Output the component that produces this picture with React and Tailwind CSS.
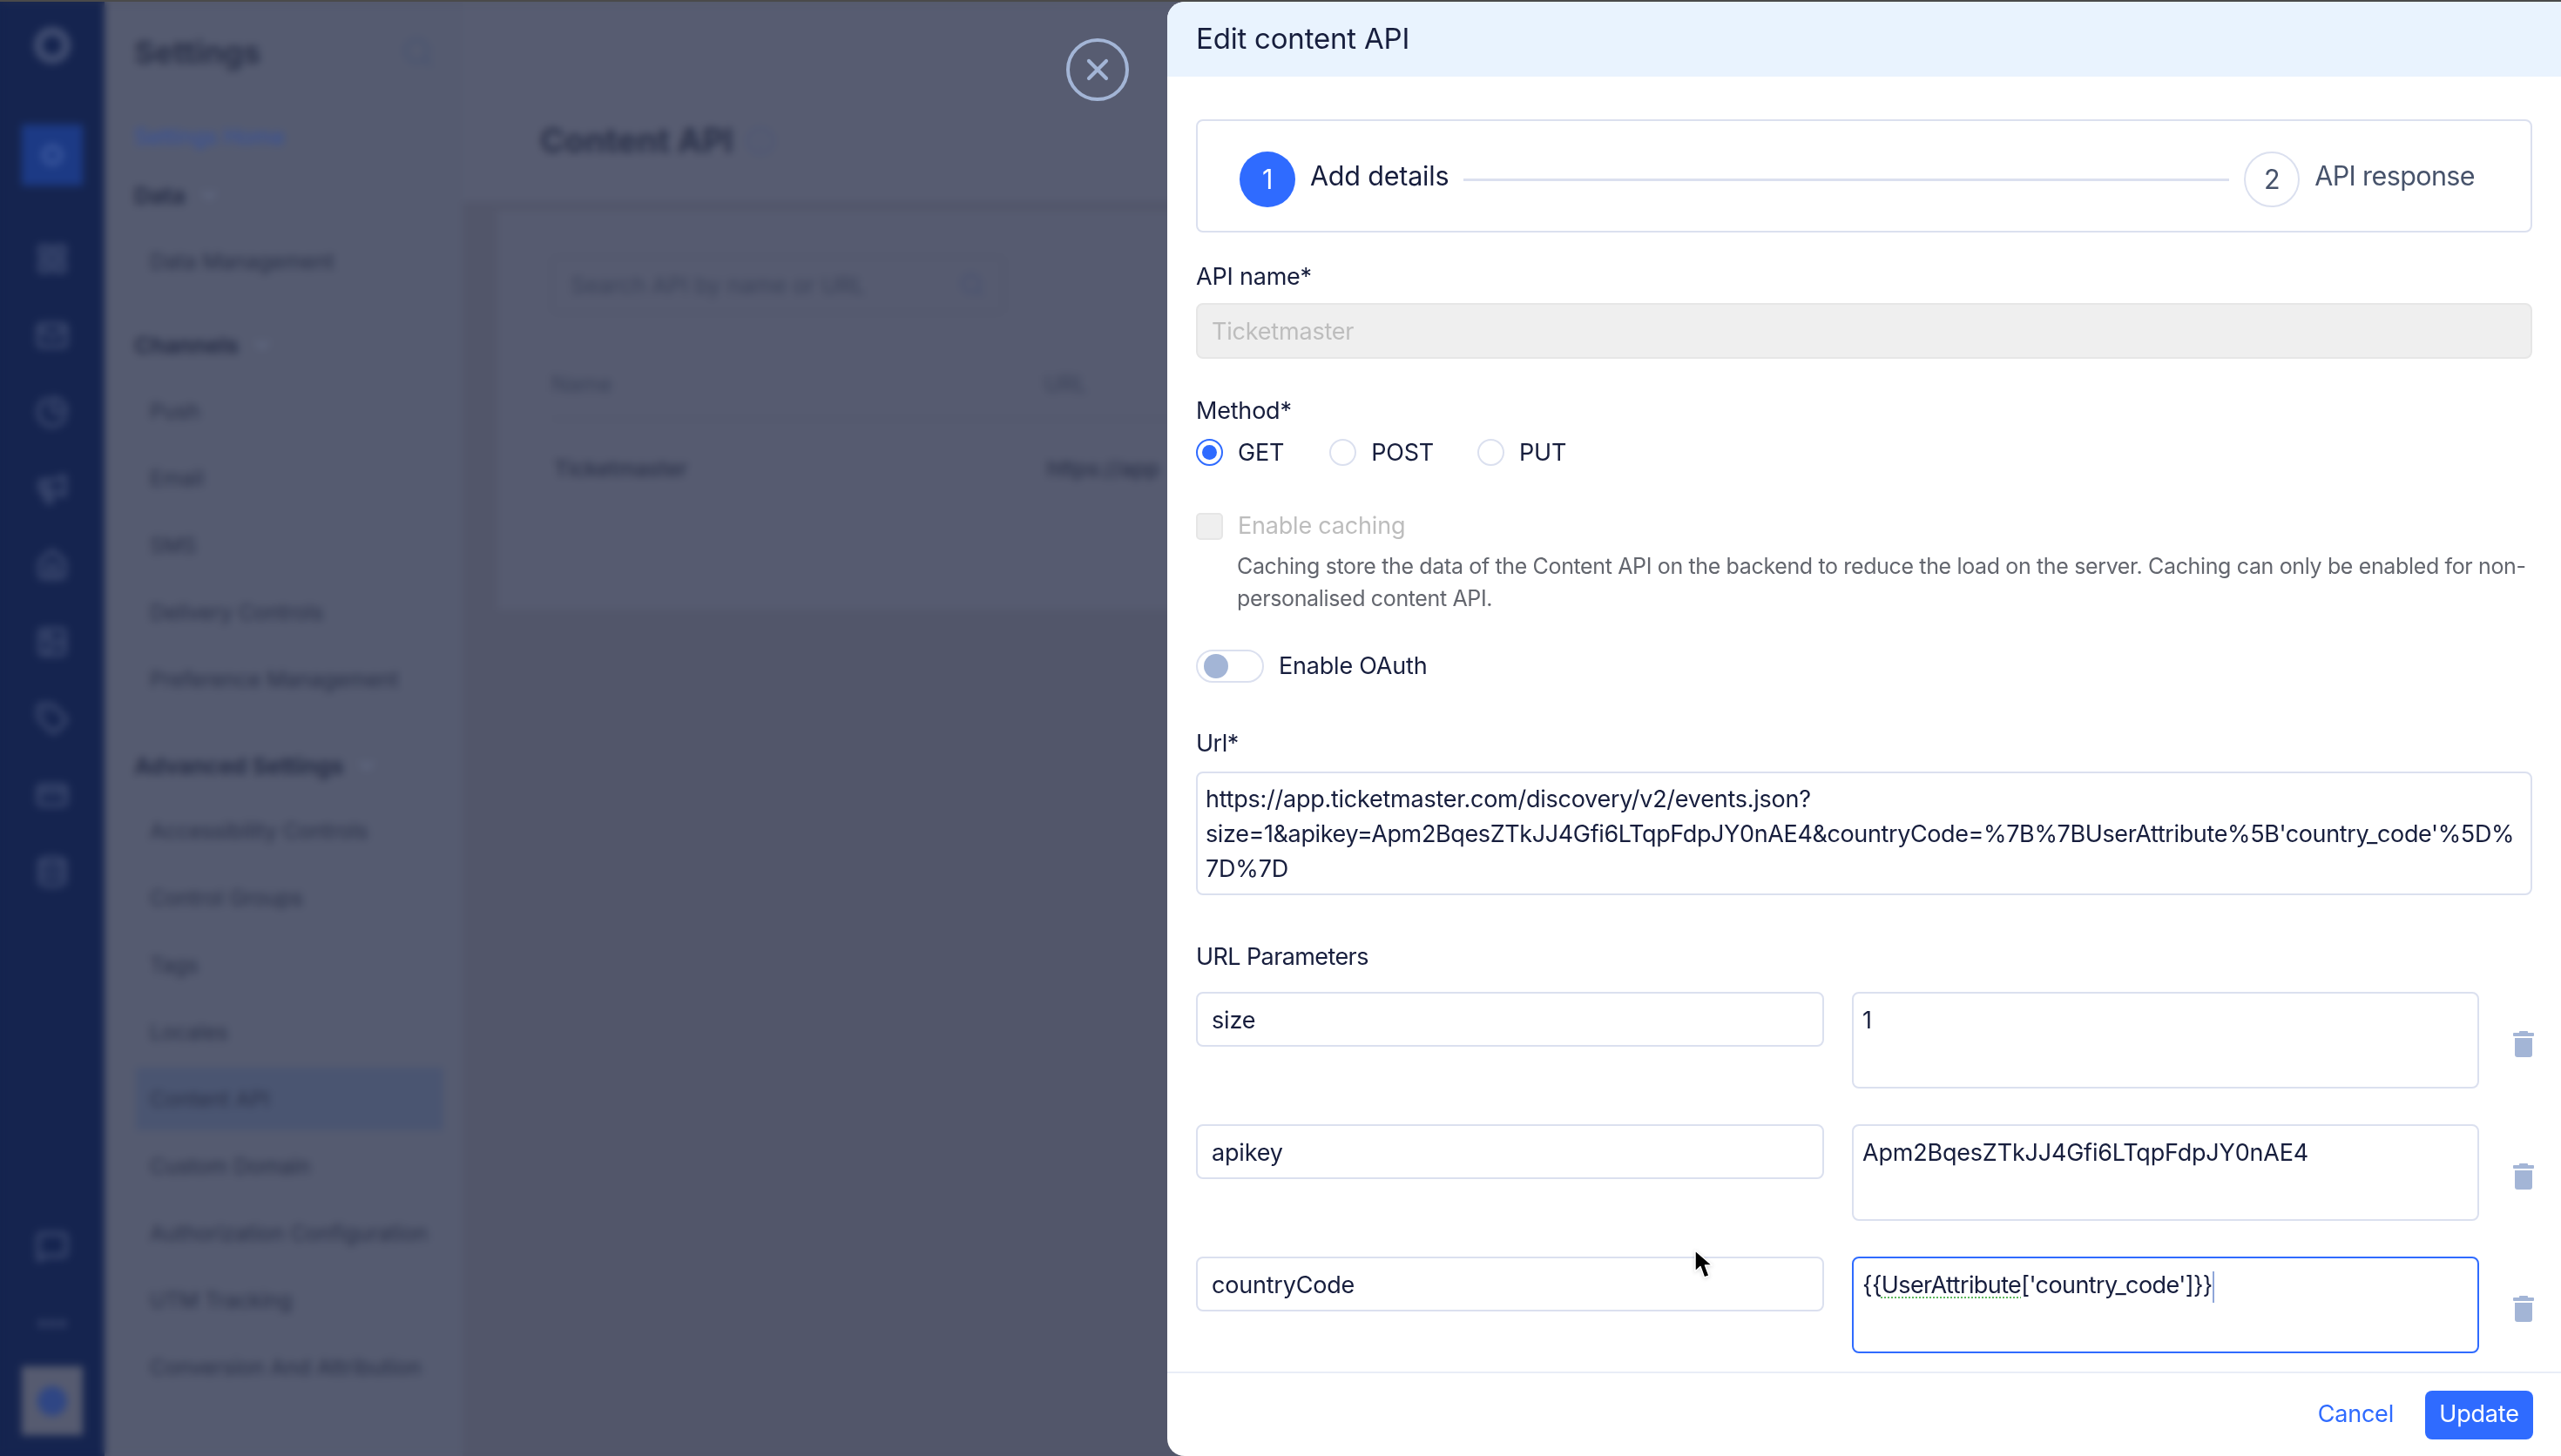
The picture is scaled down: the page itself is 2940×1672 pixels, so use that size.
import {
  LayoutGrid,
  Mail,
  PieChart,
  Megaphone,
  House,
  Image,
  Tag,
  CreditCard,
  Database,
  MessageSquare,
  MoreHorizontal,
  Search,
  ChevronDown,
  Info,
  X,
} from "lucide-react";

const railIcons = [LayoutGrid, Mail, PieChart, Megaphone, House, Image, Tag, CreditCard, Database];

const channelLinks = ["Push", "Email", "SMS", "Delivery Controls", "Preference Management"];
const advancedLinks = [
  "Accessibility Controls",
  "Control Groups",
  "Tags",
  "Locales",
  "Content API",
  "Custom Domain",
  "Authorization Configuration",
  "UTM Tracking",
  "Conversion And Attribution",
];

const params = [
  { key: "size", value: "1" },
  { key: "apikey", value: "Apm2BqesZTkJJ4Gfi6LTqpFdpJY0nAE4" },
  { key: "countryCode", focused: true },
];

const SideItem = ({ label, active }) => (
  <div
    className={`w-[353px] h-[72px] px-[16px] flex items-center text-[24.5px] whitespace-nowrap text-[#2a3149] ${
      active ? "bg-[#4a5571]" : ""
    }`}
  >
    {label}
  </div>
);

const SideHeading = ({ label, className }) => (
  <div className={`h-[52px] flex items-center gap-[14px] text-[26px] font-bold text-[#272e47] ${className}`}>
    {label}
    <ChevronDown size={26} className="text-[#6a7490]" />
  </div>
);

const Radio = ({ label, checked, className }) => (
  <div className={`flex items-center gap-[17px] ${className}`}>
    <div
      className={`w-[31px] h-[31px] rounded-full border-2 flex items-center justify-center ${
        checked ? "border-[#2f6bff]" : "border-[#dbe0ef]"
      }`}
    >
      {checked && <div className="w-[17px] h-[17px] rounded-full bg-[#2f6bff]" />}
    </div>
    <span className="pt-[2px]">{label}</span>
  </div>
);

const TrashIcon = () => (
  <svg width="24" height="30" viewBox="0 0 24 30" className="shrink-0 fill-[#a3b5d6]">
    <path d="M8 0h8a1 1 0 0 1 1 1v1h6a1 1 0 0 1 1 1v2a1 1 0 0 1-1 1H1a1 1 0 0 1-1-1V3a1 1 0 0 1 1-1h6V1a1 1 0 0 1 1-1z" />
    <path d="M2 8h20v19a3 3 0 0 1-3 3H5a3 3 0 0 1-3-3z" />
  </svg>
);

const Background = () => (
  <div className="h-full flex bg-[#52566a]">
    <div className="w-[120px] shrink-0 bg-[#15244f] flex flex-col items-center text-[#3d4a70]">
      <div className="h-[100px] flex items-center justify-center">
        <div className="w-[42px] h-[42px] rounded-full border-[10px] border-[#434f72]" />
      </div>
      <div className="w-[70px] h-[70px] mt-[41px] bg-[#1c3a85] flex items-center justify-center">
        <div className="w-[24px] h-[24px] rounded-full border-[5px] border-[#3f5ba0]" />
      </div>
      <div className="flex flex-col gap-[50px] mt-[65px]">
        {railIcons.map((Icon, i) => (
          <Icon key={i} size={38} strokeWidth={3} />
        ))}
      </div>
      <div className="mt-auto flex flex-col items-center">
        <MessageSquare size={38} strokeWidth={3} />
        <MoreHorizontal size={40} strokeWidth={3} className="mt-[50px]" />
        <div className="w-[70px] h-[79px] mt-[29px] mb-[24px] bg-[#565b70] flex items-center justify-center">
          <div className="w-[34px] h-[34px] rounded-full bg-[#2f4684]" />
        </div>
      </div>
    </div>

    <div className="w-[411px] shrink-0 bg-[#555b70] pl-[34px]">
      <div className="h-[116px] flex items-center justify-between pr-[32px]">
        <span className="text-[36px] font-bold text-[#2a3149]">Settings</span>
        <Search size={38} className="text-[#475372]" />
      </div>
      <div className="h-[80px] flex items-center text-[25px] text-[#34509e]">Settings Home</div>
      <SideHeading label="Data" />
      <div className="mt-[14px] pl-[2px]">
        <SideItem label="Data Management" />
      </div>
      <SideHeading label="Channels" className="mt-[34px]" />
      <div className="mt-[14px] pl-[2px] flex flex-col gap-[5px]">
        {channelLinks.map((l) => (
          <SideItem key={l} label={l} />
        ))}
      </div>
      <SideHeading label="Advanced Settings" className="mt-[37px]" />
      <div className="mt-[13px] pl-[2px] flex flex-col gap-[5px]">
        {advancedLinks.map((l) => (
          <SideItem key={l} label={l} active={l === "Content API"} />
        ))}
      </div>
    </div>

    <div className="flex-1 min-w-0 overflow-hidden">
      <div className="h-[232px] bg-[#575c71] border-b-2 border-[#505468] pl-[89px] pt-[131px]">
        <div className="flex items-center gap-[14px] text-[38px] font-bold text-[#2a3149]">
          Content API
          <Info size={34} className="text-[#4b5675]" />
        </div>
      </div>
      <div className="h-[458px] mt-[8px] ml-[40px] bg-[#565b70] pt-[52px] pl-[62px]">
        <div className="w-[520px] h-[66px] border-2 border-[#505569] rounded-lg pl-[20px] pr-[20px] flex items-center justify-between text-[26px] text-[#3a4259]">
          Search API by name or URL
          <Search size={30} className="text-[#465070]" />
        </div>
        <div className="flex mt-[63px] text-[25px] text-[#3a4259] h-[59px] border-b-2 border-[#505569]">
          <span className="w-[566px]">Name</span>
          <span>URL</span>
        </div>
        <div className="flex mt-[38px] text-[24.5px] font-medium text-[#2a3149] whitespace-nowrap">
          <span className="w-[569px] pl-[3px]">Ticketmaster</span>
          <span>https://app</span>
        </div>
      </div>
    </div>
  </div>
);

const Drawer = () => (
  <div className="absolute right-0 top-[2px] bottom-0 w-[1600px] bg-white rounded-l-[20px] overflow-hidden flex flex-col text-[#171e3d] text-[27px] tracking-[-0.2px]">
    <div className="h-[86px] shrink-0 bg-[#e9f3fe] px-[33px] flex items-center text-[33px]">Edit content API</div>

    <div className="flex-1 min-h-0 px-[33px] pt-[49px]">
      <div className="h-[130px] border-2 border-[#dbe0ef] rounded-lg pt-[8px] pl-[48px] pr-[64px] flex items-center text-[30.5px]">
        <div className="w-[64px] h-[64px] rounded-full bg-[#2f6bff] text-white flex items-center justify-center shrink-0">
          1
        </div>
        <span className="ml-[17px] mb-[8px]">Add details</span>
        <div className="flex-1 h-[3px] bg-[#dbe0ef] mx-[17px]" />
        <div className="w-[64px] h-[64px] rounded-full border-2 border-[#dbe0ef] text-[#47536b] flex items-center justify-center shrink-0">
          2
        </div>
        <span className="ml-[17px] mb-[8px] text-[#47536b] tracking-[-0.6px]">API response</span>
      </div>

      <div className="mt-[31px] h-[40px] flex items-center">API name*</div>
      <div className="mt-[10px] h-[64px] bg-[#efefef] border-2 border-[#e6e6e6] rounded-lg px-[16px] pt-[2px] flex items-center text-[#bdbdbd]">
        Ticketmaster
      </div>

      <div className="mt-[40px] h-[40px] flex items-center">Method*</div>
      <div className="mt-[7px] h-[40px] flex items-center gap-[52px]">
        <Radio label="GET" checked />
        <Radio label="POST" />
        <Radio label="PUT" className="-ml-[2px]" />
      </div>

      <div className="mt-[45px] h-[40px] flex items-center gap-[17px] text-[#bdbdbd]">
        <div className="w-[31px] h-[31px] bg-[#efefef] border-2 border-[#e6e6e6] rounded-[5px]" />
        Enable caching
      </div>
      <div className="mt-[8px] pl-[47px] text-[25px] leading-[37px] tracking-[-0.36px] whitespace-nowrap text-[#63666e]">
        <div>
          Caching store the data of the Content API on the backend to reduce the load on the server. Caching can only be
          enabled for non-
        </div>
        <div>personalised content API.</div>
      </div>

      <div className="mt-[40px] h-[38px] flex items-center gap-[17px]">
        <div className="w-[78px] h-[38px] border-2 border-[#dbe0ef] rounded-full pl-[7px] flex items-center">
          <div className="w-[28px] h-[28px] rounded-full bg-[#a3b5d6]" />
        </div>
        Enable OAuth
      </div>

      <div className="mt-[50px] h-[40px] flex items-center tracking-[-0.5px]">Url*</div>
      <div className="mt-[12px] h-[142px] border-2 border-[#dbe0ef] rounded-lg px-[9px] py-[10px] leading-[40px] whitespace-nowrap">
        <div className="tracking-[-0.25px]">https://app.ticketmaster.com/discovery/v2/events.json?</div>
        <div className="tracking-[-0.38px]">
          size=1&amp;apikey=Apm2BqesZTkJJ4Gfi6LTqpFdpJY0nAE4&amp;countryCode=%7B%7BUserAttribute%5B'country_code'%5D%
        </div>
        <div>7D%7D</div>
      </div>

      <div className="mt-[50px] h-[40px] pt-[2px] flex items-center tracking-[-0.6px]">URL Parameters</div>
      <div className="mt-[21px] flex flex-col gap-[41px]">
        {params.map((p) => (
          <div key={p.key} className="flex items-start h-[111px]">
            <div className="w-[721px] h-[63px] shrink-0 border-2 border-[#dbe0ef] rounded-lg px-[16px] pt-[4px] flex items-center">
              {p.key}
            </div>
            <div
              className={`w-[720px] h-[111px] shrink-0 ml-[32px] border-2 rounded-lg px-[10px] pt-[13px] leading-[36px] ${
                p.focused ? "border-[#2f6bff] tracking-[-0.6px]" : "border-[#dbe0ef]"
              }`}
            >
              {p.focused ? (
                <>
                  {"{{"}
                  <span className="underline decoration-dotted decoration-2 decoration-[#5cb85c] underline-offset-[4px]">
                    UserAttribute
                  </span>
                  {"['country_code']}}"}
                  <span className="inline-block w-[2px] h-[36px] bg-[#8fa6d9] align-middle" />
                </>
              ) : (
                p.value
              )}
            </div>
            <div className="self-center shrink-0 ml-[39px] mt-[9px]">
              <TrashIcon />
            </div>
          </div>
        ))}
      </div>
    </div>

    <div className="h-[97px] shrink-0 border-t-2 border-[#e9edf7] pr-[32px] flex items-center justify-end gap-[36px]">
      <span className="text-[#2f6bff]">Cancel</span>
      <div className="w-[124px] h-[56px] bg-[#2f6bff] text-white rounded-lg flex items-center justify-center">
        Update
      </div>
    </div>
  </div>
);

const App = () => {
  return (
    <div className="relative w-[2940px] h-[1672px] overflow-hidden font-[Inter,sans-serif] bg-[#52566a]">
      <div className="h-[2px] bg-[#4a4a4a]" />
      <div className="h-[1670px]">
        <Background />
      </div>

      {/* dim page behind the drawer */}
      <div className="absolute inset-0 top-[2px] backdrop-blur-[5px]" />

      <button className="absolute left-[1224px] top-[44px] w-[72px] h-[72px] rounded-full border-4 border-[#a3b5d6] flex items-center justify-center text-[#a3b5d6]">
        <X size={40} strokeWidth={2.5} />
      </button>

      <Drawer />

      {/* mouse pointer */}
      <svg width="24" height="36" viewBox="0 0 24 36" className="absolute left-[1944px] top-[1434px] drop-shadow-sm">
        <path
          d="M2 2 L2 26 L8 20.5 L12.5 33 L18 31 L13.5 19 L21.5 19 Z"
          fill="#000"
          stroke="#fff"
          strokeWidth="1.5"
          strokeLinejoin="round"
        />
      </svg>
    </div>
  );
};

export default App;
